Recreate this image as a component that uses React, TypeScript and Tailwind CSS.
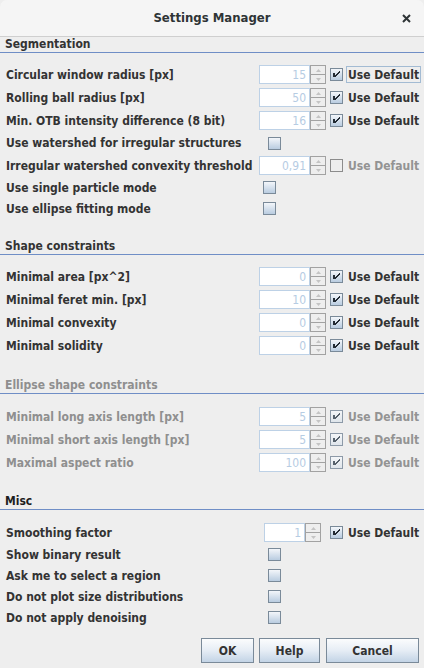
import React from 'react'

const FONT = "font-['DejaVu_Sans_Condensed','DejaVu_Sans',sans-serif]"

type CheckProps = { checked?: boolean; disabled?: boolean }

function CheckBox({ checked = false, disabled = false }: CheckProps) {
  const box = disabled
    ? checked
      ? 'border-[#8d9aa8] bg-linear-to-b from-[#f4f6f8] to-[#dfe5eb]'
      : 'border-[#8c8c8c] bg-[#eeeeee]'
    : 'border-[#7a8a99] bg-linear-to-b from-[#f3f6fa] to-[#b9cce0]'
  return (
    <div className={`relative h-[13px] w-[13px] shrink-0 border ${box}`}>
      {checked && (
        <svg viewBox="0 0 11 11" className="absolute left-0 top-0 h-[11px] w-[11px]" shapeRendering="crispEdges">
          <polygon
            points="2,4 4,4 4,6 8,2 9,2 9,3 4,8 2,8"
            fill={disabled ? '#56616c' : '#222a33'}
          />
        </svg>
      )}
    </div>
  )
}

function Spinner({ value, fieldW = 51 }: { value: string; fieldW?: number }) {
  return (
    <div className="flex h-[19px] shrink-0">
      <div
        className="flex h-full items-center justify-end border border-[#bdd1e6] bg-white pr-[3px] text-[12px] text-[#b6cce3]"
        style={{ width: fieldW }}
      >
        {value}
      </div>
      <div className="flex h-full w-[16px] flex-col border border-[#a2a2a2] bg-[#eeeeee]">
        <div className="flex flex-1 items-center justify-center border-b border-[#a2a2a2]">
          <svg width="5" height="3" viewBox="0 0 5 3">
            <polygon points="2.5,0 5,3 0,3" fill="#c4c4c4" />
          </svg>
        </div>
        <div className="flex flex-1 items-center justify-center">
          <svg width="5" height="3" viewBox="0 0 5 3">
            <polygon points="0,0 5,0 2.5,3" fill="#c4c4c4" />
          </svg>
        </div>
      </div>
    </div>
  )
}

function UseDefault({ checked = true, disabled = false, focused = false }: { checked?: boolean; disabled?: boolean; focused?: boolean }) {
  return (
    <div className="ml-[4px] flex items-center">
      <CheckBox checked={checked} disabled={disabled} />
      <div
        className={`ml-[3px] flex h-[17px] items-center border px-[1px] text-[12px] font-bold ${
          focused ? 'border-[#a3bbd3]' : 'border-transparent'
        } ${disabled ? 'text-[#939393]' : 'text-[#333333]'}`}
      >
        Use Default
      </div>
    </div>
  )
}

function Label({ text, disabled = false, w = 259 }: { text: string; disabled?: boolean; w?: number }) {
  return (
    <div
      className={`shrink-0 whitespace-nowrap pl-[6px] text-[12px] font-bold ${disabled ? 'text-[#8f8f8f]' : 'text-[#333333]'}`}
      style={{ width: w }}
    >
      {text}
    </div>
  )
}

function SpinRow({ label, value, disabled = false, focused = false, cbDisabled = false, cbChecked = true, h = 23 }: {
  label: string; value: string; disabled?: boolean; focused?: boolean; cbDisabled?: boolean; cbChecked?: boolean; h?: number
}) {
  return (
    <div className="flex items-center" style={{ height: h }}>
      <Label text={label} disabled={disabled} />
      <Spinner value={value} />
      <UseDefault checked={cbChecked} disabled={disabled || cbDisabled} focused={focused} />
    </div>
  )
}

function CheckRow({ label, offset, h = 21 }: { label: string; offset: number; h?: number }) {
  return (
    <div className="flex items-center" style={{ height: h }}>
      <Label text={label} />
      <div style={{ marginLeft: offset }}>
        <CheckBox />
      </div>
    </div>
  )
}

function Header({ text, disabled = false, dark = false }: { text: string; disabled?: boolean; dark?: boolean }) {
  return (
    <div
      className={`h-[16px] border-b border-[#6f8ec6] pl-[5px] text-[12px] font-bold leading-[15px] ${
        disabled ? 'text-[#8f8f8f]' : dark ? 'text-[#1e1e1e]' : 'text-[#333333]'
      }`}
    >
      {text}
    </div>
  )
}

function DlgButton({ text, w, className = '' }: { text: string; w: number; className?: string }) {
  return (
    <div
      className={`flex h-[25px] items-center justify-center border border-[#7a8a99] bg-linear-to-b from-[#fbfcfd] via-[#e6edf5] to-[#c3d4e6] text-[12px] font-bold text-[#333333] ${className}`}
      style={{ width: w }}
    >
      {text}
    </div>
  )
}

export default function App() {
  return (
    <div className={`h-[668px] w-[424px] overflow-hidden bg-[#eeeeee] ${FONT}`}>
      {/* Title bar */}
      <div className="relative flex h-[37px] items-center justify-center rounded-t-[7px] border-b border-[#cfcfcf] bg-[#f5f5f5]">
        <span className="text-[13px] font-bold text-[#2e3436]">Settings Manager</span>
        <svg className="absolute left-[402px] top-[14px]" width="9" height="9" viewBox="0 0 9 9">
          <path d="M1 1 L8 8 M8 1 L1 8" stroke="#2e3436" strokeWidth="2" />
        </svg>
      </div>

      {/* Segmentation */}
      <Header text="Segmentation" />
      <div className="mt-[10px]">
        <SpinRow label="Circular window radius [px]" value="15" focused />
        <SpinRow label="Rolling ball radius [px]" value="50" />
        <SpinRow label="Min. OTB intensity difference (8 bit)" value="16" />
        <CheckRow label="Use watershed for irregular structures" offset={9} h={22} />
        <SpinRow label="Irregular watershed convexity threshold" value="0,91" cbChecked={false} cbDisabled />
        <CheckRow label="Use single particle mode" offset={4} />
        <CheckRow label="Use ellipse fitting mode" offset={4} />
      </div>

      {/* Shape constraints */}
      <div className="mt-[20px]">
        <Header text="Shape constraints" />
      </div>
      <div className="mt-[10px]">
        <SpinRow label="Minimal area [px^2]" value="0" />
        <SpinRow label="Minimal feret min. [px]" value="10" />
        <SpinRow label="Minimal convexity" value="0" />
        <SpinRow label="Minimal solidity" value="0" />
      </div>

      {/* Ellipse shape constraints */}
      <div className="mt-[21px]">
        <Header text="Ellipse shape constraints" disabled />
      </div>
      <div className="mt-[11px]">
        <SpinRow label="Minimal long axis length [px]" value="5" disabled />
        <SpinRow label="Minimal short axis length [px]" value="5" disabled />
        <SpinRow label="Maximal aspect ratio" value="100" disabled />
      </div>

      {/* Misc */}
      <div className="mt-[20px]">
        <Header text="Misc" dark />
      </div>
      <div className="mt-[11px]">
        <div className="flex h-[23px] items-center">
          <Label text="Smoothing factor" w={264} />
          <Spinner value="1" fieldW={41} />
          <div className="ml-[5px]">
            <UseDefault />
          </div>
        </div>
        <CheckRow label="Show binary result" offset={9} />
        <CheckRow label="Ask me to select a region" offset={9} />
        <CheckRow label="Do not plot size distributions" offset={9} />
        <CheckRow label="Do not apply denoising" offset={9} />
      </div>

      {/* Buttons */}
      <div className="mt-[10px] flex justify-end pr-[5px]">
        <DlgButton text="OK" w={53} />
        <DlgButton text="Help" w={61} className="ml-[5px]" />
        <DlgButton text="Cancel" w={93} className="ml-[6px]" />
      </div>
    </div>
  )
}
